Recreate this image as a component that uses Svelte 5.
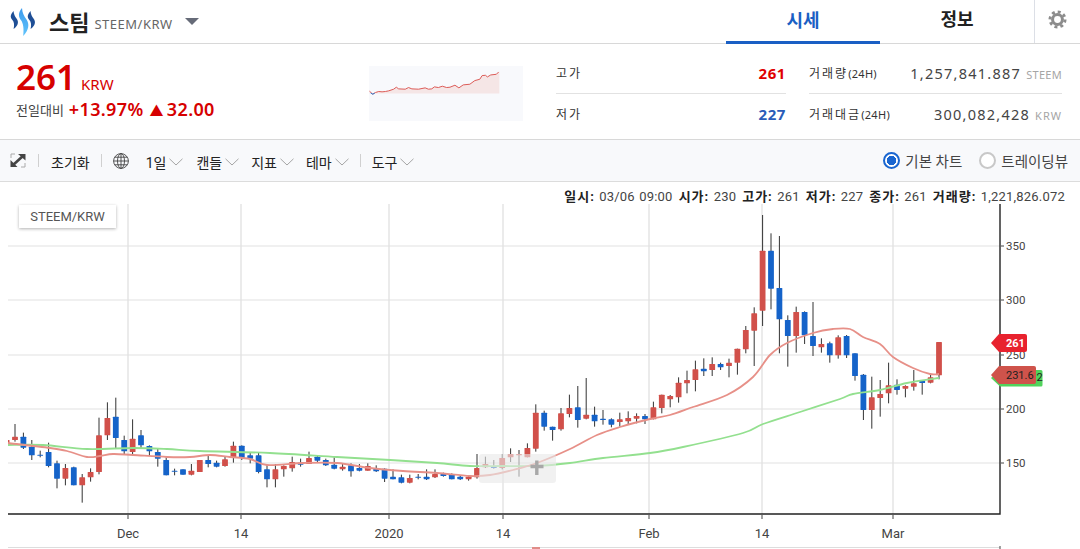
<script>
  const X = (i) => 15 + 8.4 * i;
  // [wickTop, wickBottom, bodyTop, bodyBottom, direction] measured per group, in thirds of a pixel
  const groups = [
    { base: 380, from: -1, rows: [
      [176,195,180,190,'u'],[132,185,170,180,'u'],[158,207,170,203,'d'],[180,240,200,226,'d'],[212,232,224,226,'d'],[188,262,216,258,'d'],
      [242,325,250,296,'d'],[252,316,264,296,'u'],[260,316,262,316,'d'],[282,368,292,316,'u'],[265,305,276,292,'u'],[113,283,166,276,'u'],
      [67,180,114,166,'u'],[53,207,110,174,'d'],[167,222,180,214,'d'],[118,224,176,216,'u'],[150,205,166,196,'d'],[196,228,198,214,'d'],
      [204,260,216,236,'d'],[232,286,240,286,'d'],[266,286,272,274,'d'],[268,284,268,284,'d'],[252,286,272,284,'u'],[240,276,240,276,'u'],
      [228,262,240,252,'d'],[242,262,248,260,'d'],[228,260,238,258,'u'],[185,248,197,234,'u'],[196,240,197,234,'d'],[218,250,226,236,'d'],
      [218,280,226,276,'d'],[255,322,268,298,'d'],
      [252,322,268,298,'u'],[256,290,258,268,'u'],[230,275,246,265,'u'],[236,260,248,254,'d'],[215,252,234,252,'u'],[226,246,230,242,'d'],
      [236,258,240,256,'d'],[232,268,254,266,'d'],[250,272,260,268,'u'],[250,290,256,274,'d'],[252,274,264,272,'d'],[250,272,258,272,'u'],
      [256,276,264,274,'d'],[265,306,266,296,'d'],[268,298,290,298,'d'],[284,310,292,308,'d'],[284,310,294,308,'u'],[282,298,290,292,'d'],
      [268,300,290,298,'d'],[268,294,282,292,'u'],[278,290,280,288,'d'],[280,298,284,298,'d'],[285,300,290,298,'d'],[285,302,290,298,'u'],
      [222,296,264,292,'u'],[230,264,252,262,'u'],[240,266,258,264,'d'],[222,268,234,264,'u'],[205,246,222,232,'u'],[210,290,222,226,'u'],
      [190,232,204,232,'u'],[73,215,98,206,'u'],[92,152,98,140,'d'],[140,182,140,150,'d'],[84,152,100,148,'u'],[44,112,84,102,'u']
    ]},
    { base: 300, from: 67, rows: [
      [258,383,322,360,'d'],[234,358,344,356,'u'],[320,380,344,364,'d'],[330,374,356,360,'d'],[355,382,358,374,'d'],[338,380,358,366,'u'],
      [334,372,354,364,'u'],[340,370,348,356,'u'],[342,372,348,358,'d'],[305,358,322,358,'u'],[284,340,284,324,'u'],[285,322,288,298,'u'],
      [232,308,248,292,'u'],[212,280,240,250,'u'],[182,274,208,240,'u'],[175,228,206,214,'d'],[172,228,192,210,'u'],[188,210,192,202,'d'],
      [176,232,188,198,'u'],[146,224,146,188,'u'],[78,160,90,148,'u'],[22,198,40,92,'u']
    ]},
    { base: 200, from: 89, rows: [
      [45,378,152,332,'u'],[100,328,152,266,'d'],[108,460,264,358,'d'],[346,500,360,408,'d'],[320,458,336,408,'u'],[334,432,336,406,'d'],
      [306,468,408,438,'d'],[415,458,432,442,'u'],[425,488,430,466,'d'],[406,476,412,466,'u'],[405,474,408,466,'d']
    ]},
    { base: 320, from: 100, rows: [
      [100,182,100,168,'d'],[162,300,164,270,'d'],[170,326,232,270,'u'],[180,290,222,234,'u'],[128,250,196,220,'u'],[178,224,194,210,'d'],
      [196,232,198,206,'u'],[150,212,190,200,'u'],[180,224,181,189,'d'],[160,190,172,188,'u'],[66,178,66,166,'u']
    ]}
  ];
  const candles = groups.flatMap((g) =>
    g.rows.map((r, n) => ({
      x: X(g.from + n),
      wt: g.base + r[0] / 3,
      wb: g.base + r[1] / 3,
      bt: g.base + r[2] / 3,
      bh: Math.max((r[3] - r[2]) / 3, 1.2),
      up: r[4] === 'u'
    }))
  );

  const smooth = (p) => {
    let d = `M${p[0][0]} ${p[0][1]}`;
    for (let i = 0; i < p.length - 1; i++) {
      const a = p[Math.max(i - 1, 0)], b = p[i], c = p[i + 1], e = p[Math.min(i + 2, p.length - 1)];
      d += ` C${b[0] + (c[0] - a[0]) / 6} ${b[1] + (c[1] - a[1]) / 6} ${c[0] - (e[0] - b[0]) / 6} ${c[1] - (e[1] - b[1]) / 6} ${c[0]} ${c[1]}`;
    }
    return d;
  };
  const ma5 = smooth([[8,443],[50,448],[67,451],[87,457],[100,456],[113,454],[133,455],[167,457],[190,457],[210,455],[230,457],[250,459],[267,465],[303,463],[337,463],[370,468],[403,471],[437,473],[470,476],[490,475],[513,470],[537,463],[570,449],[597,435],[620,427],[650,419],[670,415],[693,407],[727,395],[753,377],[770,355],[787,343],[813,333],[833,329],[850,329],[863,337],[880,344],[893,357],[913,368],[930,374],[939,374]]);
  const ma20 = smooth([[8,445],[43,445],[87,449],[133,448],[167,449],[200,451],[270,453],[337,457],[390,460],[437,463],[470,466],[503,466],[537,466],[570,463],[603,458],[650,453],[683,447],[743,433],[763,424],[800,412],[840,399],[853,394],[880,390],[907,383],[939,378]]);

  const gridX = [128, 241, 389, 503, 649, 762, 893];
  const xLabels = [[128,'Dec'],[241,'14'],[389,'2020'],[503,'14'],[649,'Feb'],[762,'14'],[893,'Mar']];
  const yLabels = [[246,'350'],[300,'300'],[355,'250'],[409,'200'],[463,'150']];

  const sparkPts = '12,88 22,97 30,92 40,89 50,90 60,89 70,87 85,82 93,76 100,81 120,82 130,77 140,81 160,82 180,78 190,82 200,81 208,75 220,77 232,73 245,77 255,76 270,70 282,78 295,69 315,67 330,56 345,52 352,41 362,40 368,45 378,39 395,37 402,30';

  const menus = ['캔들', '지표', '테마'];
  const info = [['일시:', '03/06 09:00'], ['시가:', '230'], ['고가:', '261'], ['저가:', '227'], ['종가:', '261'], ['거래량:', '1,221,826.072']];
</script>

{#snippet chevron()}
  <svg class="chev" viewBox="0 0 14 8"><path d="M.5 .8 7 7 13.5 .8" /></svg>
{/snippet}

<div class="page">
  <header class="top">
    <svg class="logo" viewBox="0 0 27 28">
      <defs>
        <linearGradient id="sky" x1="0" y1="0" x2="0" y2="1"><stop offset="0" stop-color="#3b9bee"/><stop offset="1" stop-color="#62c4fb"/></linearGradient>
      </defs>
      <path fill="#1f4f96" d="M3.500 3 C0 7 .2 9.500 2.400 12 C4 14 4.600 16.500 3.600 21 C8.500 17.500 9 13.500 6.500 10.500 C5 8.500 3.800 6.500 3.500 3Z" />
      <path fill="url(#sky)" d="M12 0 C7.800 5 8.400 8.800 11 12.300 C13 15 14.200 20 13.200 28 C19 22 19.600 16 16.500 11.500 C14 8 12.300 5 12 0Z" />
      <path fill="#1f4f96" d="M20.500 3 C17 7 17.200 9.500 19.400 12 C21 14 21.600 16.500 20.600 21 C25.500 17.500 26 13.500 23.500 10.500 C22 8.500 20.800 6.500 20.500 3Z" />
    </svg>
    <h1>스팀</h1>
    <span class="pair">STEEM/KRW</span>
    <span class="caret"></span>
    <div class="tabs">
      <a class="tab active" href="#a">시세</a>
      <a class="tab" href="#b">정보</a>
    </div>
    <div class="gear">
      <svg viewBox="0 0 20 20" width="19" height="19">
        <circle cx="10" cy="10" r="8" fill="none" stroke="#8c8c8c" stroke-width="3" stroke-dasharray="3.14 3.14" />
        <circle cx="10" cy="10" r="5.2" fill="none" stroke="#8c8c8c" stroke-width="3.2" />
      </svg>
    </div>
  </header>

  <section class="summary">
    <div class="price">
      <div class="now"><strong>261</strong><span>KRW</span></div>
      <div class="change"><span class="lab">전일대비</span><b>+13.97%</b><b class="abs"><i>▲</i>32.00</b></div>
    </div>
    <svg class="spark" viewBox="12 12 462 166">
      <polygon fill="#f5e6e6" points="12,95 {sparkPts} 404,30 404,95" />
      <polyline fill="none" stroke="#dc5b57" stroke-width="3" points={sparkPts} />
      <polyline fill="none" stroke="#2b80d8" stroke-width="3" points="16,94 22,97 28,94" />
    </svg>
    <dl class="stats">
      <div class="row"><dt>고가</dt><dd class="red">261</dd></div>
      <div class="row"><dt>거래량<small>(24H)</small></dt><dd class="num">1,257,841.887<em>STEEM</em></dd></div>
      <div class="row"><dt>저가</dt><dd class="blue">227</dd></div>
      <div class="row"><dt>거래대금<small>(24H)</small></dt><dd class="num">300,082,428<em class="krw">KRW</em></dd></div>
    </dl>
  </section>

  <nav class="toolbar">
    <svg class="expand" viewBox="0 0 16 15">
      <path d="M1 5V1H5M15 10V14H11" fill="none" stroke="#aaa" />
      <path d="M2.500 12.500 13.500 2.500" stroke="#444" stroke-width="2.600" />
      <path d="M8 1H15.500V7.500ZM.5 7 7.500 14H.5Z" fill="#444" />
    </svg>
    <span class="sep first"></span>
    <span class="tool reset">초기화</span>
    <span class="sep second"></span>
    <svg class="globe" viewBox="0 0 16 16" fill="none" stroke="#444" stroke-width=".9">
      <circle cx="8" cy="8" r="7.4" /><ellipse cx="8" cy="8" rx="3.5" ry="7.4" /><path d="M8 .6V15.400M.6 8H15.400M1.800 4.200H14.200M1.800 11.800H14.200" />
    </svg>
    <span class="tool day">1일{@render chevron()}</span>
    {#each menus as m}
      <span class="tool menu">{m}{@render chevron()}</span>
    {/each}
    <span class="sep third"></span>
    <span class="tool">도구{@render chevron()}</span>
    <div class="views">
      <span class="radio on"></span><span class="view first-view">기본 차트</span>
      <span class="radio"></span><span class="view">트레이딩뷰</span>
    </div>
  </nav>

  <section class="chart">
    <div class="info">
      {#each info as [k, v]}
        <span class="pairing"><b>{k}</b> {v}</span>
      {/each}
    </div>
    <div class="chip">STEEM/KRW</div>
    <svg class="plot" viewBox="0 204 1080 345" width="1080" height="345">
      <g class="gridh">
        {#each yLabels as [y]}<line x1="8" x2="1000" y1={y} y2={y} />{/each}
      </g>
      <g class="gridv">
        {#each gridX as x}<line x1={x} x2={x} y1="204" y2="514" />{/each}
      </g>
      <clipPath id="area"><rect x="8" y="204" width="992" height="310" /></clipPath>
      <g clip-path="url(#area)">
        {#each candles as c}
          <line class="wick" x1={c.x} x2={c.x} y1={c.wt} y2={c.wb} />
          <rect x={c.x - 2.9} y={c.bt} width="5.8" height={c.bh} rx=".6" fill={c.up ? '#d1504a' : '#1563c9'} />
        {/each}
        <path class="ma green" d={ma20} />
        <path class="ma redl" d={ma5} />
      </g>
      <rect x="479" y="454" width="77" height="29" rx="3" fill="#e9e9e9" fill-opacity=".62" />
      <path d="M530.500 466.500H543.500M536.800 460.500V475" stroke="#a8a8a8" stroke-width="3.400" />
      <path class="axis" d="M8 514H1000V204" />
      {#each yLabels as [y, t]}
        <line class="tick" x1="1001" x2="1004" y1={y} y2={y} />
        <text class="ylbl" x="1006" y={y + 4}>{t}</text>
      {/each}
      {#each xLabels as [x, t]}
        <line class="tick" x1={x} x2={x} y1="515" y2="519" />
        <text class="lbl" {x} y="537.500" text-anchor="middle">{t}</text>
      {/each}
      <line x1="8" x2="1000" y1="547.500" y2="547.500" stroke="#ddd" />
      <rect x="532" y="547" width="8" height="2" fill="#e08d88" />
      <line class="tick" x1="1000" x2="1000" y1="546" y2="549" />

      <path d="M1000 370H1041a1.500 1.500 0 0 1 1.500 1.500V385a1.500 1.500 0 0 1 -1.500 1.500H1000L991 378Z" fill="#51d35c" />
      <text class="badge dark" x="1036.500" y="381">2</text>
      <path d="M999 366H1034a2 2 0 0 1 2 2V382a2 2 0 0 1 -2 2H999L991 375Z" fill="#cf534b" />
      <text class="badge dark" x="1006" y="379">231.6</text>
      <path d="M999 334H1025a2 2 0 0 1 2 2V350a2 2 0 0 1 -2 2H999L991 343Z" fill="#e8222e" />
      <text class="badge light" x="1006" y="347">261</text>
    </svg>
  </section>
</div>

<style>
  :global(body) { margin: 0; background: #fff; }
  .page {
    width: 1080px; height: 549px; overflow: hidden; color: #222;
    font-family: "Noto Sans", "Noto Sans CJK KR", sans-serif;
  }
  .top { display: flex; align-items: center; height: 43px; border-bottom: 1px solid #d8d8d8; box-sizing: content-box; }
  .logo { width: 27px; height: 28px; margin-left: 10px; flex: none; }
  h1 { margin: 0 0 0 12px; font-size: 22px; font-weight: 700; line-height: 1; color: #222; }
  .pair { margin-left: 5px; font-size: 13px; color: #666; position: relative; top: 2px; letter-spacing: .5px; }
  .caret { margin-left: 12px; border: 7px solid transparent; border-top-color: #666b78; border-bottom-width: 0; }
  .tabs { display: flex; margin-left: auto; height: 100%; }
  .tab {
    display: flex; align-items: center; justify-content: center; width: 154px; box-sizing: border-box;
    color: #222; font-size: 18px; font-weight: 700; text-decoration: none; padding-bottom: 4px; border-bottom: 3px solid transparent;
  }
  .tab.active { color: #1a5fc4; border-bottom-color: #1a5fc4; height: 44px; }
  .gear { width: 46px; height: 100%; display: flex; align-items: center; justify-content: center; border-left: 1px solid #dcdfe6; padding-bottom: 5px; box-sizing: border-box; }

  .summary { display: flex; height: 95px; border-bottom: 1px solid #d8d8d8; }
  .price { width: 353px; margin-left: 16px; flex: none; }
  .now { display: flex; align-items: baseline; margin-top: 12px; color: #d60000; line-height: 42px; height: 42px; }
  .now strong { font-size: 35px; font-weight: 600; }
  .now span { font-size: 15px; margin-left: 5px; }
  .change { display: flex; align-items: center; height: 24px; margin-top: -1px; }
  .lab { font-size: 13px; color: #444; }
  .change b { font-size: 18px; font-weight: 600; color: #d60000; margin-left: 5px; letter-spacing: .35px; }
  .change .abs { margin-left: 6px; }
  .change i { font-style: normal; font-size: 14px; margin-right: 3px; }
  .spark { width: 154px; height: 55px; flex: none; margin-top: 22px; background: #f8f9fc; }
  .stats { margin: 8px 0 0 33px; display: grid; grid-template-columns: 230px 253px; column-gap: 23px; grid-template-rows: 42px 40px; flex: none; }
  .row { display: flex; align-items: center; justify-content: space-between; }
  .row:nth-child(-n+2) { border-bottom: 1px solid #e2e2e2; }
  dt { font-size: 12px; color: #333; letter-spacing: 2px; }
  dt small { font-size: 11px; letter-spacing: .3px; }
  dd { margin: 0; font-size: 15px; font-weight: 700; letter-spacing: .6px; }
  .red { color: #e00000; }
  .blue { color: #2a5cb8; }
  dd.num { font-size: 14.500px; font-weight: 400; color: #444; letter-spacing: 1.250px; display: flex; align-items: baseline; }
  dd.num em { font-style: normal; font-size: 11px; color: #a5a5a5; margin-left: 5px; letter-spacing: .3px; }
  dd.num em.krw { letter-spacing: 1px; }

  .toolbar { display: flex; align-items: center; height: 41px; background: #f8f9fb; border-bottom: 1px solid #dcdcdc; font-family: Roboto, "Noto Sans CJK KR", sans-serif; }
  .expand { width: 16px; height: 15px; margin-left: 10px; flex: none; }
  .sep { width: 1px; height: 13px; background: #d0d0d0; flex: none; }
  .sep.first { margin-left: 12px; }
  .sep.second { margin-left: 11px; }
  .sep.third { margin-left: -1px; margin-right: 11px; }
  .tool { display: inline-flex; align-items: center; font-size: 14px; color: #222; white-space: nowrap; position: relative; top: 1px; }
  .reset { margin-left: 12px; }
  .globe { width: 16px; height: 16px; margin-left: 11px; flex: none; }
  .day { margin-left: 17px; margin-right: 13px; }
  .menu { margin-right: 12px; }
  .chev { width: 14px; height: 8px; margin-left: 3px; fill: none; stroke: #a5a5a5; stroke-width: 1; }
  .views { margin-left: auto; display: flex; align-items: center; margin-right: 12px; }
  .radio { width: 17px; height: 17px; box-sizing: border-box; border-radius: 50%; border: 2px solid #c8c8c8; background: #fff; }
  .radio.on { border-color: #1a66d0; background: radial-gradient(circle, #1a66d0 0 4.500px, #fff 5px); }
  .view { font-size: 14.500px; color: #444; margin-left: 5px; }
  .first-view { margin-right: 17px; }

  .chart { position: relative; height: 367px; }
  .info {
    height: 22px; display: flex; justify-content: flex-end; align-items: center; gap: 6px; padding-right: 15px;
    font-family: Roboto, "Noto Sans CJK KR", sans-serif; font-size: 13px; letter-spacing: .2px; color: #444; white-space: nowrap; position: relative; top: 2px;
  }
  .info b { color: #222; font-weight: 700; letter-spacing: 1px; }
  .pairing { white-space: pre; word-spacing: 1px; }
  .chip {
    position: absolute; left: 19px; top: 23px; width: 97px; height: 23px; display: flex; align-items: center; justify-content: center;
    background: #fff; box-shadow: 0 1px 3px rgba(0,0,0,.3); font: 13px Roboto, sans-serif; color: #555; z-index: 1;
  }
  .plot { display: block; }
  .gridh line { stroke: #f0f0f0; stroke-width: 2; }
  .gridv line { stroke: #e0e0e0; stroke-width: 1.300; }
  .wick { stroke: #333; stroke-width: 1; }
  .ma { fill: none; stroke-width: 1.800; }
  .green { stroke: #93e08f; }
  .redl { stroke: #e79088; }
  .axis { fill: none; stroke: #222; stroke-width: 1.400; }
  .tick { stroke: #444; stroke-width: 1; }
  .lbl { font: 13px Roboto, sans-serif; fill: #444; }
  .ylbl { font: 11.500px Roboto, sans-serif; fill: #444; }
  .badge { font: 11px Roboto, sans-serif; }
  .badge.dark { fill: #222; }
  .badge.light { fill: #fff; font-weight: 700; }
</style>
